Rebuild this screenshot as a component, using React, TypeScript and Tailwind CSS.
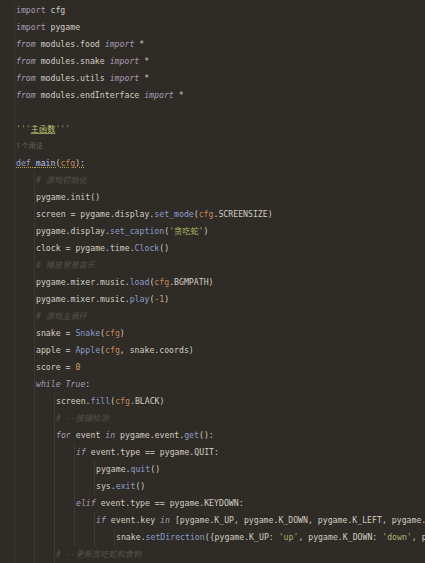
import React from "react";

type Tok = [string, string?];

const K = "text-[#a99bb4]";
const KI = "text-[#a99bb4] italic";
const FN = "text-[#8d9dca]";
const CFG = "text-[#c4865a]";
const NUM = "text-[#cfa262]";
const STR = "text-[#aab66a]";
const CM = "text-[#57524a] italic";

type Line = { indent: number; toks: Tok[]; hint?: boolean };

const lines: Line[] = [
  { indent: 0, toks: [["import", K], [" cfg"]] },
  { indent: 0, toks: [["import", K], [" pygame"]] },
  { indent: 0, toks: [["from", KI], [" modules.food "], ["import", KI], [" *"]] },
  { indent: 0, toks: [["from", KI], [" modules.snake "], ["import", KI], [" *"]] },
  { indent: 0, toks: [["from", KI], [" modules.utils "], ["import", KI], [" *"]] },
  { indent: 0, toks: [["from", KI], [" modules.endInterface "], ["import", KI], [" *"]] },
  { indent: 0, toks: [] },
  {
    indent: 0,
    toks: [["'''", "text-[#93a070]"], ["主函数", "text-[#c2c872] underline decoration-[#8f9a55]"], ["'''", "text-[#93a070]"]],
  },
  { indent: 0, hint: true, toks: [["1 个用法", "text-[#67625a]"]] },
  {
    indent: 0,
    toks: [
      ["def", "text-[#9ea3cc] underline decoration-dotted decoration-[#b6a44a]"],
      [" ", "underline decoration-dotted decoration-[#b6a44a]"],
      ["main", "text-[#b9c2e6] underline decoration-dotted decoration-[#b6a44a]"],
      ["(", "underline decoration-dotted decoration-[#b6a44a]"],
      ["cfg", CFG + " underline decoration-dotted decoration-[#b6a44a]"],
      ["):", "underline decoration-dotted decoration-[#b6a44a]"],
    ],
  },
  { indent: 1, toks: [["# 游戏初始化", CM]] },
  { indent: 1, toks: [["pygame.init()"]] },
  { indent: 1, toks: [["screen = pygame.display."], ["set_mode", FN], ["("], ["cfg", CFG], [".SCREENSIZE)"]] },
  { indent: 1, toks: [["pygame.display."], ["set_caption", FN], ["("], ["'贪吃蛇'", STR], [")"]] },
  { indent: 1, toks: [["clock = pygame.time."], ["Clock", FN], ["()"]] },
  { indent: 1, toks: [["# 播放背景音乐", CM]] },
  { indent: 1, toks: [["pygame.mixer.music."], ["load", FN], ["("], ["cfg", CFG], [".BGMPATH)"]] },
  { indent: 1, toks: [["pygame.mixer.music."], ["play", FN], ["("], ["-1", NUM], [")"]] },
  { indent: 1, toks: [["# 游戏主循环", CM]] },
  { indent: 1, toks: [["snake = "], ["Snake", FN], ["("], ["cfg", CFG], [")"]] },
  { indent: 1, toks: [["apple = "], ["Apple", FN], ["("], ["cfg", CFG], [", snake.coords)"]] },
  { indent: 1, toks: [["score = "], ["0", NUM]] },
  { indent: 1, toks: [["while", KI], [" "], ["True", KI], [":"]] },
  { indent: 2, toks: [["screen."], ["fill", FN], ["("], ["cfg", CFG], [".BLACK)"]] },
  { indent: 2, toks: [["# --按键检测", CM]] },
  { indent: 2, toks: [["for", KI], [" event "], ["in", KI], [" pygame.event."], ["get", FN], ["():"]] },
  { indent: 3, toks: [["if", KI], [" event.type == pygame.QUIT:"]] },
  { indent: 4, toks: [["pygame."], ["quit", FN], ["()"]] },
  { indent: 4, toks: [["sys."], ["exit", FN], ["()"]] },
  { indent: 3, toks: [["elif", KI], [" event.type == pygame.KEYDOWN:"]] },
  {
    indent: 4,
    toks: [["if", KI], [" event.key "], ["in", KI], [" [pygame.K_UP, pygame.K_DOWN, pygame.K_LEFT, pygame.K_RIGHT]:"]],
  },
  {
    indent: 5,
    toks: [
      ["snake."],
      ["setDirection", FN],
      ["({pygame.K_UP: "],
      ["'up'", STR],
      [", pygame.K_DOWN: "],
      ["'down'", STR],
      [", pygame.K_LEFT: "],
      ["'left'", STR],
      ["})"],
    ],
  },
  { indent: 2, toks: [["# --更新贪吃蛇和食物", CM]] },
];

const CodeLine = ({ line }: { line: Line }) => (
  <div className="flex h-[17px] items-stretch whitespace-pre">
    {Array(line.indent)
      .fill("")
      .map((_, i) => (
        <span key={i} className="w-[19px] shrink-0 border-r border-[#3d3932] mr-[1px]" />
      ))}
    <span
      className={
        line.hint
          ? "flex items-center text-[7px] font-['Noto_Sans','Noto_Sans_CJK_SC',sans-serif]"
          : "flex items-center"
      }
    >
      {line.toks.map(([t, c], i) => (
        <span key={i} className={c ?? "text-[#d2cdc2]"}>
          {t}
        </span>
      ))}
    </span>
  </div>
);

export default function App() {
  return (
    <div className="h-[563px] w-[425px] overflow-hidden bg-[#2f2b26] pl-[14px] pt-[1.5px] font-['DejaVu_Sans_Mono','Noto_Sans_CJK_SC',monospace] text-[8.2px] text-[#d2cdc2]">
      <div className="h-full border-l border-[#3a362f] pl-[1px]">
        {lines.map((l, i) => (
          <CodeLine key={i} line={l} />
        ))}
      </div>
    </div>
  );
}
